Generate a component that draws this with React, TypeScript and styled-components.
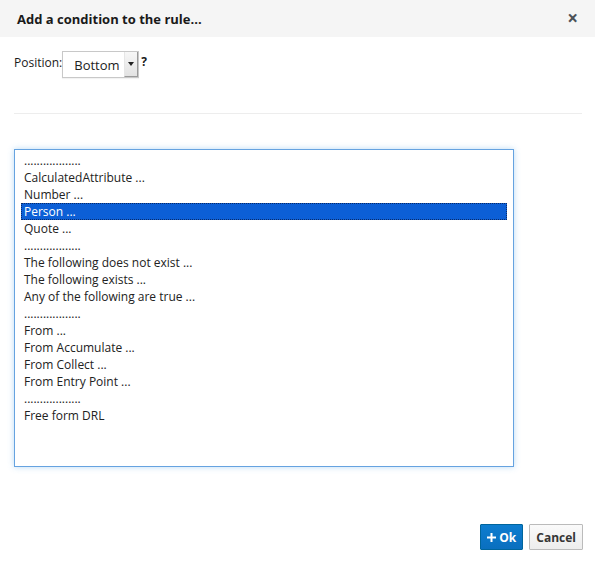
import React from "react";
import styled, { createGlobalStyle } from "styled-components";

const Global = createGlobalStyle`
  html, body { margin: 0; padding: 0; background: #fff; }
  body { font-family: "Open Sans", "Liberation Sans", sans-serif; color: #363636; }
`;

const Dialog = styled.div`
  width: 595px;
  height: 562px;
  display: flex;
  flex-direction: column;
  background: #fff;
`;

const Header = styled.div`
  height: 37px;
  background: #f5f5f5;
  display: flex;
  align-items: center;
  justify-content: space-between;
  padding: 0 17px 0 17px;
  box-sizing: border-box;
`;

const Title = styled.h4`
  margin: 0;
  font-size: 13px;
  font-weight: 700;
  color: #1a1a1a;
`;

const Close = styled.span`
  font-size: 19px;
  font-weight: 700;
  color: #4d5258;
  line-height: 1;
`;

const Body = styled.div`
  padding: 14px 13px 0 14px;
  display: flex;
  flex-direction: column;
  flex: 1;
`;

const PositionRow = styled.div`
  display: flex;
  align-items: flex-start;
  font-size: 12px;
  color: #1a1a1a;
  height: 28px;
`;

const Label = styled.span`
  padding-top: 3px;
`;

const Select = styled.div`
  width: 77px;
  height: 27px;
  box-sizing: border-box;
  border: 1px solid #c8c8c8;
  background: #fff;
  display: flex;
  align-items: center;
  box-shadow: 0 1px 1px rgba(0,0,0,0.05);
`;

const SelectText = styled.span`
  font-size: 13px;
  padding-left: 11px;
  color: #222;
  flex: 1;
  padding-top: 1px;
`;

const Arrow = styled.span`
  width: 14px;
  height: 25px;
  background: linear-gradient(#f7f7f7, #e2e2e2);
  border-left: 1px solid #e6e6e6;
  border-right: 1px solid #9a9a9a;
  border-bottom: 1px solid #9a9a9a;
  box-sizing: border-box;
  display: flex;
  align-items: center;
  justify-content: center;
  &::after {
    content: "";
    border-left: 3px solid transparent;
    border-right: 3px solid transparent;
    border-top: 4px solid #222;
  }
`;

const Help = styled.span`
  font-weight: 700;
  font-size: 12px;
  padding-left: 2px;
  padding-top: 2px;
  color: #1a1a1a;
`;

const Rule = styled.hr`
  border: 0;
  border-top: 1px solid #ededed;
  margin: 34px 0 0 0;
`;

const List = styled.div`
  margin-top: 35px;
  width: 500px;
  height: 318px;
  box-sizing: border-box;
  border: 1px solid #66a3e0;
  box-shadow: 0 0 6px rgba(102, 175, 233, 0.45);
  padding: 2px 6px;
  background: #fff;
`;

const Option = styled.div<{ $selected?: boolean }>`
  height: 17px;
  line-height: 17px;
  font-size: 12px;
  padding: 0 3px;
  white-space: nowrap;
  color: ${(p) => (p.$selected ? "#fff" : "#222")};
  background: ${(p) => (p.$selected ? "#0c5fd6" : "transparent")};
  outline: ${(p) => (p.$selected ? "1px dotted #0a2a66" : "none")};
  outline-offset: -1px;
`;

const Footer = styled.div`
  display: flex;
  justify-content: flex-end;
  gap: 6px;
  padding: 0 12px 12px 0;
  margin-top: auto;
`;

const Button = styled.button<{ $primary?: boolean }>`
  height: 26px;
  margin: 0;
  box-sizing: border-box;
  font-family: "Open Sans", "Liberation Sans", sans-serif;
  font-size: 12px;
  font-weight: 700;
  padding: 0 6px;
  display: flex;
  align-items: center;
  gap: 3px;
  border: 1px solid ${(p) => (p.$primary ? "#00659c" : "#bbb")};
  color: ${(p) => (p.$primary ? "#fff" : "#363636")};
  background: ${(p) =>
    p.$primary ? "linear-gradient(#0d7dcf, #0a6fbf)" : "linear-gradient(#fafafa, #ededed)"};
  border-radius: 1px;
`;

const items = [
  "..................",
  "CalculatedAttribute ...",
  "Number ...",
  "Person ...",
  "Quote ...",
  "..................",
  "The following does not exist ...",
  "The following exists ...",
  "Any of the following are true ...",
  "..................",
  "From ...",
  "From Accumulate ...",
  "From Collect ...",
  "From Entry Point ...",
  "..................",
  "Free form DRL",
];

export default function App() {
  return (
    <>
      <Global />
      <Dialog>
        <Header>
          <Title>Add a condition to the rule...</Title>
          <Close>×</Close>
        </Header>
        <Body>
          <PositionRow>
            <Label>Position:</Label>
            <Select>
              <SelectText>Bottom</SelectText>
              <Arrow />
            </Select>
            <Help>?</Help>
          </PositionRow>
          <Rule />
          <List>
            {items.map((t, i) => (
              <Option key={i} $selected={i === 3}>
                {t}
              </Option>
            ))}
          </List>
        </Body>
        <Footer>
          <Button $primary>
            <svg width="9" height="9" viewBox="0 0 9 9">
              <path d="M3.5 0h2v3.5H9v2H5.5V9h-2V5.5H0v-2h3.5z" fill="#fff" />
            </svg>
            Ok
          </Button>
          <Button>Cancel</Button>
        </Footer>
      </Dialog>
    </>
  );
}
